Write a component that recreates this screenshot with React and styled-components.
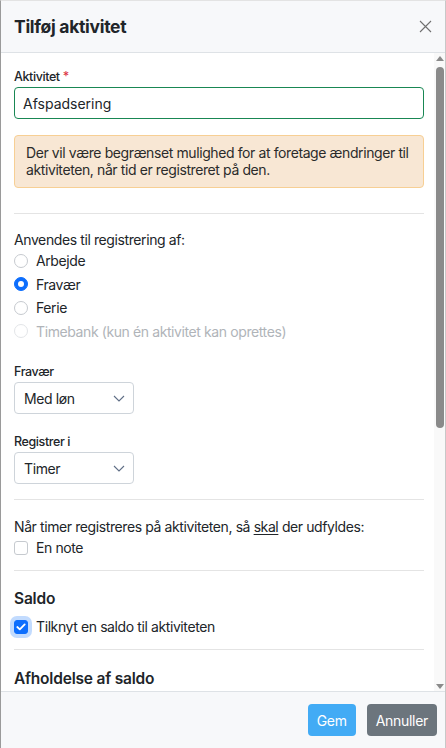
import React, { useState } from "react";
import styled, { createGlobalStyle } from "styled-components";

const GlobalStyle = createGlobalStyle`
  html, body {
    margin: 0;
    padding: 0;
    background: #fff;
  }
  body {
    font-family: Inter, "Noto Sans", sans-serif;
    color: #212529;
    letter-spacing: -0.4px;
  }
  * { box-sizing: border-box; }
`;

const Modal = styled.div`
  width: 446px;
  height: 748px;
  display: flex;
  flex-direction: column;
  border-left: 1px solid #9a9a9a;
  border-right: 1px solid #c8c8c8;
  border-top: 1px solid #e3e3e3;
  background: #fff;
  overflow: hidden;
`;

const Header = styled.div`
  height: 52px;
  flex: none;
  display: flex;
  align-items: center;
  justify-content: space-between;
  padding: 0 12px 0 13px;
  background: #f7f8fa;
  border-bottom: 1px solid #dee2e6;
`;

const Title = styled.h1`
  margin: 0;
  font-size: 17.5px;
  font-weight: 700;
  letter-spacing: -0.3px;
`;

const CloseButton = styled.button`
  width: 16px;
  height: 16px;
  padding: 0;
  border: 0;
  background: none;
  display: flex;
  align-items: center;
  justify-content: center;
  cursor: pointer;
`;

const BodyRow = styled.div`
  flex: 1;
  min-height: 0;
  display: flex;
`;

const Content = styled.div`
  flex: 1;
  min-width: 0;
  overflow: hidden;
  padding: 17px 10px 0 13px;
  font-size: 14px;
`;

const ScrollTrack = styled.div`
  width: 11px;
  flex: none;
  display: flex;
  flex-direction: column;
  align-items: center;
  background: #f9f9f9;
  padding: 3px 0 2px;
`;

const Arrow = styled.div`
  width: 0;
  height: 0;
  border-left: 4px solid transparent;
  border-right: 4px solid transparent;
  ${({ $down }) =>
    $down
      ? "border-top: 5px solid #8a8a8a; margin-top: auto;"
      : "border-bottom: 5px solid #8a8a8a;"}
`;

const Thumb = styled.div`
  width: 8px;
  margin-top: 6px;
  background: #8a8a8a;
  border-radius: 4px;
`;

const FieldLabel = styled.label`
  display: block;
  font-size: 12.5px;
  line-height: 14px;
  font-weight: 500;
  margin-bottom: 3px;
`;

const Required = styled.span`
  color: #dc3545;
`;

const TextInput = styled.input`
  display: block;
  width: 100%;
  height: 32px;
  padding: 0 8px;
  font: inherit;
  font-size: 14px;
  color: #212529;
  border: 1px solid #198754;
  border-radius: 4px;
  outline: none;
`;

const Alert = styled.div`
  margin-top: 16px;
  padding: 8px 11px 9px;
  background: #f8e7d4;
  border: 1px solid #f7cf94;
  border-radius: 4px;
  line-height: 17px;
  color: #2b2b2b;
`;

const Divider = styled.hr`
  margin: ${({ $top = 16 }) => $top}px 0 0;
  border: 0;
  border-top: 1px solid #e4e4e4;
`;

const Section = styled.div`
  margin-top: ${({ $top }) => $top}px;
`;

const Lead = styled.div`
  line-height: 19px;
`;

const OptionRow = styled.label`
  display: flex;
  align-items: center;
  gap: 8px;
  height: ${({ $h = 23.5 }) => $h}px;
  color: ${({ disabled }) => (disabled ? "#b0b4b9" : "#212529")};
`;

const Radio = styled.span`
  width: 14px;
  height: 14px;
  flex: none;
  border-radius: 50%;
  border: 1px solid ${({ $checked, $disabled }) =>
    $checked ? "#0d6efd" : $disabled ? "#e3e5e8" : "#c6cacf"};
  background: ${({ $checked }) => ($checked ? "#0d6efd" : "#fff")};
  display: flex;
  align-items: center;
  justify-content: center;

  &::after {
    content: "";
    display: ${({ $checked }) => ($checked ? "block" : "none")};
    width: 6px;
    height: 6px;
    border-radius: 50%;
    background: #fff;
  }
`;

const Checkbox = styled.span`
  width: 14px;
  height: 14px;
  flex: none;
  border-radius: 3px;
  border: 1px solid ${({ $checked }) => ($checked ? "#0d6efd" : "#c6cacf")};
  background: ${({ $checked }) => ($checked ? "#0d6efd" : "#fff")};
  box-shadow: ${({ $focus }) =>
    $focus ? "0 0 0 4px rgba(13, 110, 253, 0.25)" : "none"};
  display: flex;
  align-items: center;
  justify-content: center;
`;

const SelectBox = styled.div`
  width: 120px;
  height: 32px;
  display: flex;
  align-items: center;
  justify-content: space-between;
  padding: 0 8px 0 9px;
  border: 1px solid #ced4da;
  border-radius: 4px;
  font-size: 14px;
`;

const Underline = styled.span`
  text-decoration: underline;
  text-underline-offset: 2px;
`;

const Heading = styled.h2`
  margin: 0;
  font-size: 15.5px;
  font-weight: 600;
  line-height: 20px;
  letter-spacing: -0.2px;
`;

const Footer = styled.div`
  height: 57px;
  flex: none;
  display: flex;
  align-items: center;
  justify-content: flex-end;
  gap: 11px;
  padding: 0 8px 0 0;
  background: #f7f8fa;
  border-top: 1px solid #dee2e6;
`;

const Button = styled.button`
  height: 32px;
  padding: 0 ${({ $pad = 9 }) => $pad}px;
  border: 0;
  border-radius: 4px;
  font: inherit;
  font-size: 14px;
  letter-spacing: -0.3px;
  color: #fff;
  background: ${({ $variant }) => ($variant === "primary" ? "#42abf5" : "#6c757d")};
  cursor: pointer;
`;

function CloseIcon() {
  return (
    <svg width="13" height="13" viewBox="0 0 13 13">
      <path d="M1 1 L12 12 M12 1 L1 12" stroke="#6f6f6f" strokeWidth="1.1" fill="none" />
    </svg>
  );
}

function Chevron() {
  return (
    <svg width="12" height="7" viewBox="0 0 12 7">
      <path d="M1 1 L6 6 L11 1" stroke="#5f6e86" strokeWidth="1.1" fill="none" />
    </svg>
  );
}

function Check() {
  return (
    <svg width="10" height="8" viewBox="0 0 10 8">
      <path d="M1.3 4 L3.8 6.4 L8.7 1.4" stroke="#fff" strokeWidth="1.8" fill="none" strokeLinecap="round" strokeLinejoin="round" />
    </svg>
  );
}

const usageOptions = [
  { id: "arbejde", label: "Arbejde" },
  { id: "fravaer", label: "Fravær" },
  { id: "ferie", label: "Ferie" },
  { id: "timebank", label: "Timebank (kun én aktivitet kan oprettes)", disabled: true },
];

function Select({ value }) {
  return (
    <SelectBox>
      <span>{value}</span>
      <Chevron />
    </SelectBox>
  );
}

export default function App() {
  const [name, setName] = useState("Afspadsering");
  const [usage, setUsage] = useState("fravaer");
  const [note, setNote] = useState(false);
  const [saldo, setSaldo] = useState(true);

  return (
    <>
      <GlobalStyle />
      <Modal>
        <Header>
          <Title>Tilføj aktivitet</Title>
          <CloseButton aria-label="Luk">
            <CloseIcon />
          </CloseButton>
        </Header>

        <BodyRow>
          <Content>
            <FieldLabel>
              Aktivitet <Required>*</Required>
            </FieldLabel>
            <TextInput value={name} onChange={(e) => setName(e.target.value)} />

            <Alert>
              Der vil være begrænset mulighed for at foretage ændringer til
              aktiviteten, når tid er registreret på den.
            </Alert>

            <Divider $top={25} />

            <Section $top={16}>
              <Lead>Anvendes til registrering af:</Lead>
              {usageOptions.map((o) => (
                <OptionRow
                  key={o.id}
                  disabled={o.disabled}
                  onClick={() => !o.disabled && setUsage(o.id)}
                >
                  <Radio $checked={usage === o.id} $disabled={o.disabled} />
                  {o.label}
                </OptionRow>
              ))}
            </Section>

            <Section $top={22}>
              <FieldLabel>Fravær</FieldLabel>
              <Select value="Med løn" />
            </Section>

            <Section $top={21}>
              <FieldLabel>Registrer i</FieldLabel>
              <Select value="Timer" />
            </Section>

            <Divider $top={15} />

            <Section $top={17}>
              <Lead>
                Når timer registreres på aktiviteten, så <Underline>skal</Underline> der udfyldes:
              </Lead>
              <OptionRow onClick={() => setNote(!note)}>
                <Checkbox $checked={note}>{note && <Check />}</Checkbox>
                En note
              </OptionRow>
            </Section>

            <Divider $top={10} />

            <Section $top={18}>
              <Heading>Saldo</Heading>
              <OptionRow $h={36} onClick={() => setSaldo(!saldo)}>
                <Checkbox $checked={saldo} $focus>
                  {saldo && <Check />}
                </Checkbox>
                Tilknyt en saldo til aktiviteten
              </OptionRow>
            </Section>

            <Divider $top={4} />

            <Section $top={19}>
              <Heading>Afholdelse af saldo</Heading>
            </Section>
          </Content>

          <ScrollTrack>
            <Arrow />
            <Thumb style={{ height: 361 }} />
            <Arrow $down />
          </ScrollTrack>
        </BodyRow>

        <Footer>
          <Button $variant="primary" $pad={9}>Gem</Button>
          <Button $pad={9}>Annuller</Button>
        </Footer>
      </Modal>
    </>
  );
}
